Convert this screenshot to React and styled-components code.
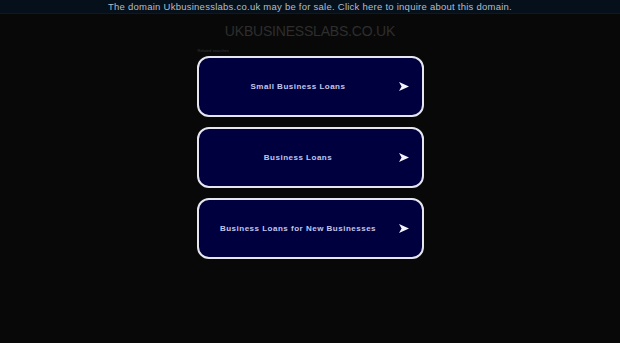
import React from 'react';
import styled, { createGlobalStyle } from 'styled-components';

const GlobalStyle = createGlobalStyle`
  html, body {
    margin: 0;
    padding: 0;
    background: #080808;
  }
  body {
    font-family: "Liberation Sans", Arial, sans-serif;
  }
`

const Page = styled.div`
  min-height: 343px;
  background: #080808;
  overflow: hidden;
`

const SaleBar = styled.div`
  height: 13px;
  background: #06101a;
  border-bottom: 1px solid #0b1a28;
  color: #b4bec8;
  font-size: 9.5px;
  line-height: 13px;
  letter-spacing: 0.25px;
  text-align: center;
  white-space: nowrap;
`

const Title = styled.h1`
  margin: 9px 0 0;
  color: #2e2e2e;
  font-size: 14px;
  font-weight: normal;
  line-height: 16px;
  letter-spacing: -0.2px;
  text-align: center;
`

const Listing = styled.div`
  width: 227px;
  margin: 0 auto;
  padding-top: 9px;
`

const Caption = styled.div`
  color: #3a3a3a;
  font-size: 4px;
  line-height: 5px;
  margin: 0 0 3px 1px;
`

const Links = styled.div`
  display: flex;
  flex-direction: column;
  gap: 10px;
`

const LinkButton = styled.a`
  position: relative;
  display: flex;
  align-items: center;
  justify-content: center;
  box-sizing: border-box;
  height: 61px;
  padding-right: 24px;
  border: 2px solid #e6e6f0;
  border-radius: 12px;
  background: #00003f;
  color: #c0c7ef;
  font-size: 8px;
  font-weight: bold;
  letter-spacing: 0.5px;
  text-decoration: none;
  cursor: pointer;
`

const Arrow = styled.svg`
  position: absolute;
  right: 13px;
  top: 50%;
  width: 10px;
  height: 9px;
  margin-top: -5px;
`

const searches = ['Small Business Loans', 'Business Loans', 'Business Loans for New Businesses'];

function App() {
  return (
    <Page>
      <GlobalStyle />
      <SaleBar>The domain Ukbusinesslabs.co.uk may be for sale. Click here to inquire about this domain.</SaleBar>
      <Title>UKBUSINESSLABS.CO.UK</Title>
      <Listing>
        <Caption>Related searches</Caption>
        <Links>
          {searches.map((s) => (
            <LinkButton key={s}>
              {s}
              <Arrow viewBox="0 0 10 9">
                <path d="M0 0 L10 4.5 L0 9 L2.6 4.5 Z" fill="#f4f4ff" />
              </Arrow>
            </LinkButton>
          ))}
        </Links>
      </Listing>
    </Page>
  );
}

export default App;
